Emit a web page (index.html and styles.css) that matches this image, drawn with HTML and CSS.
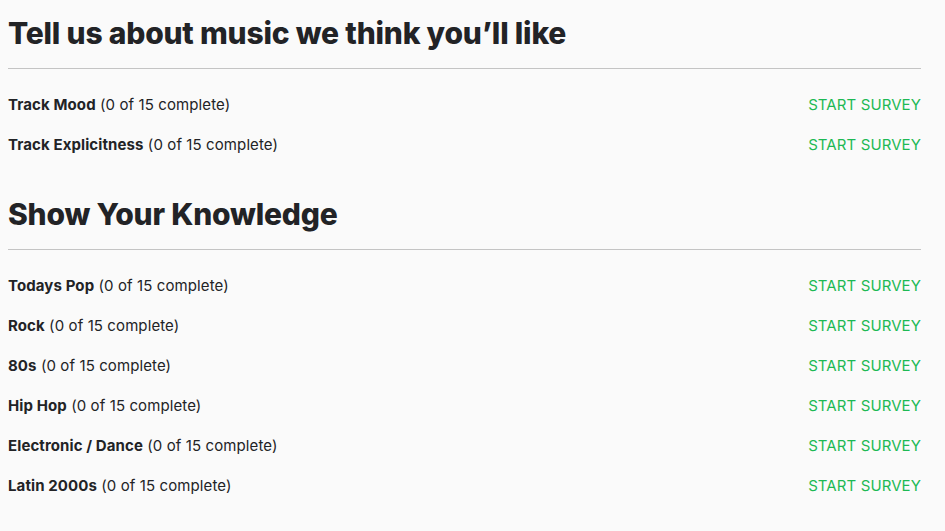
FILE: index.html
```html
<!DOCTYPE html>
<html lang="en">
<head>
    <meta charset="UTF-8">
    <meta name="viewport" content="width=device-width, initial-scale=1.0">
    <title>Surveys</title>
    <link rel="stylesheet" href="styles.css">
</head>
<body>
    <div class="page">
        <section class="survey-group">
            <h2 class="group-title">Tell us about music we think you’ll like</h2>
            <ul class="survey-list">
                <li class="survey-row"><span><b>Track Mood</b> (0 of 15 complete)</span><a href="#" class="start">START SURVEY</a></li>
                <li class="survey-row"><span><b>Track Explicitness</b> (0 of 15 complete)</span><a href="#" class="start">START SURVEY</a></li>
            </ul>
        </section>

        <section class="survey-group">
            <h2 class="group-title">Show Your Knowledge</h2>
            <ul class="survey-list">
                <li class="survey-row"><span><b>Todays Pop</b> (0 of 15 complete)</span><a href="#" class="start">START SURVEY</a></li>
                <li class="survey-row"><span><b>Rock</b> (0 of 15 complete)</span><a href="#" class="start">START SURVEY</a></li>
                <li class="survey-row"><span><b>80s</b> (0 of 15 complete)</span><a href="#" class="start">START SURVEY</a></li>
                <li class="survey-row"><span><b>Hip Hop</b> (0 of 15 complete)</span><a href="#" class="start">START SURVEY</a></li>
                <li class="survey-row"><span><b>Electronic / Dance</b> (0 of 15 complete)</span><a href="#" class="start">START SURVEY</a></li>
                <li class="survey-row"><span><b>Latin 2000s</b> (0 of 15 complete)</span><a href="#" class="start">START SURVEY</a></li>
            </ul>
        </section>
    </div>
</body>
</html>
```

FILE: styles.css
```css
body {
    margin: 0;
    background: #fafafa;
    color: #222326;
    font-family: Inter, "Noto Sans", Arial, sans-serif;
}
.page {
    padding: 13px 24px 0 8px;
}
.survey-group + .survey-group {
    margin-top: 30px;
}
.group-title {
    margin: 0;
    padding-bottom: 15px;
    border-bottom: 1px solid #c4c4c4;
    font-size: 30px;
    line-height: 40px;
    font-weight: 800;
    letter-spacing: -0.2px;
}
.survey-list {
    list-style: none;
    margin: 0;
    padding: 15px 0 0;
}
.survey-row {
    display: flex;
    justify-content: space-between;
    align-items: center;
    height: 40px;
    font-size: 15px;
    letter-spacing: 0.1px;
}
.survey-row b {
    font-weight: 700;
}
.start {
    color: #1db954;
    text-decoration: none;
    font-size: 15px;
    letter-spacing: 0.1px;
}
```
